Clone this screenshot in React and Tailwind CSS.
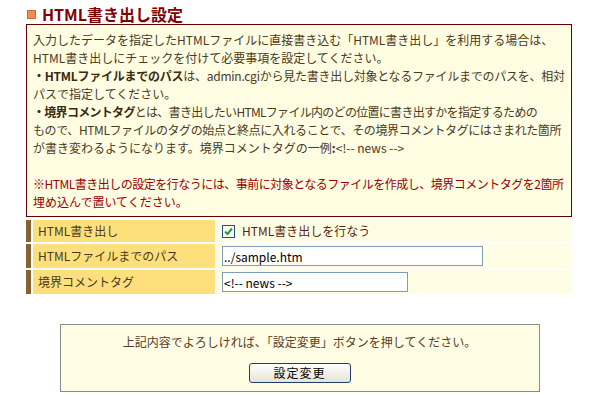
const font = { fontFamily: '"Noto Sans CJK JP", "Liberation Sans", sans-serif' };

function Row({ label, h, children }) {
  return (
    <div className={`flex ${h}`}>
      <div className="w-[5px] bg-[#846232] shrink-0" />
      <div className="w-[182px] ml-[2px] bg-[#fde07c] shrink-0 flex items-center pl-[5px] text-[#4a3a1a]">
        {label}
      </div>
      <div className="flex-1 ml-[2px] bg-[#fffde4] flex items-center pl-[5px]">{children}</div>
    </div>
  );
}

export default function App() {
  return (
    <div style={font} className="w-[599px] h-[398px] bg-white text-[12px] leading-[18px] text-[#4a3a24]">
      <div className="pl-[26px] w-[572px]">
        {/* Title */}
        <div className="h-[24px] flex items-center gap-[6px] pl-[1px] pt-[4px]">
          <span className="w-[9px] h-[9px] bg-[#f7894a] border border-[#d46a32]" />
          <h1 className="text-[16px] font-bold text-[#800000] leading-[20px]">HTML書き出し設定</h1>
        </div>

        {/* Description */}
        <div className="border border-[#660000] bg-[#fffde2] pl-[6px] pr-[2px] pt-[6px] pb-[5px] whitespace-nowrap">
          <p>入力したデータを指定したHTMLファイルに直接書き込む「HTML書き出し」を利用する場合は、</p>
          <p>HTML書き出しにチェックを付けて必要事項を設定してください。</p>
          <p className="tracking-[-0.25px]">
            <b className="text-[#3a2a12]">・HTMLファイルまでのパス</b>は、admin.cgiから見た書き出し対象となるファイルまでのパスを、相対
          </p>
          <p>パスで指定してください。</p>
          <p className="tracking-[-0.7px]">
            <b className="text-[#3a2a12]">・境界コメントタグ</b>とは、書き出したいHTMLファイル内のどの位置に書き出すかを指定するための
          </p>
          <p className="tracking-[-0.4px]">もので、HTMLファイルのタグの始点と終点に入れることで、その境界コメントタグにはさまれた箇所</p>
          <p>
            が書き変わるようになります。境界コメントタグの一例<b className="text-[#3a2a12]">:</b>&lt;!-- news --&gt;
          </p>
          <p>&nbsp;</p>
          <p className="text-[#990000] tracking-[-0.5px]">※HTML書き出しの設定を行なうには、事前に対象となるファイルを作成し、境界コメントタグを2箇所</p>
          <p className="text-[#990000]">埋め込んで置いてください。</p>
        </div>

        {/* Form rows */}
        <div className="mt-[3px] flex flex-col gap-[2px]">
          <Row label="HTML書き出し" h="h-[22px]">
            <label className="flex items-center gap-[7px] text-[#5e1e08]">
              <span className="w-[13px] h-[13px] border border-[#1c5180] bg-white flex items-center justify-center">
                <svg width="9" height="9" viewBox="0 0 9 9">
                  <path d="M1 4.5 L3.5 7 L8 1.5" stroke="#21a121" strokeWidth="2" fill="none" />
                </svg>
              </span>
              HTML書き出しを行なう
            </label>
          </Row>
          <Row label="HTMLファイルまでのパス" h="h-[24px]">
            <input
              readOnly
              value="../sample.htm"
              style={font}
              className="w-[261px] h-[20px] border border-[#7f9db9] bg-white px-[1px] text-[12px] text-black outline-none"
            />
          </Row>
          <Row label="境界コメントタグ" h="h-[24px]">
            <input
              readOnly
              value="<!-- news -->"
              style={font}
              className="w-[186px] h-[20px] border border-[#7f9db9] bg-white px-[1px] text-[12px] text-black outline-none"
            />
          </Row>
        </div>
      </div>

      {/* Submit box */}
      <div className="mt-[30px] mx-auto w-[480px] h-[68px] border border-[#8a8a8a] bg-[#fffde4] flex flex-col items-center pt-[8px]">
        <p className="text-[#5a3a1e]">上記内容でよろしければ、「設定変更」ボタンを押してください。</p>
        <button
          style={font}
          className="mt-[12px] w-[102px] h-[20px] rounded-[3px] border border-[#1f3f6a] bg-gradient-to-b from-white to-[#e6e3d6] text-[12px] leading-[18px] text-black tracking-[1px]"
        >
          設定変更
        </button>
      </div>
    </div>
  );
}
